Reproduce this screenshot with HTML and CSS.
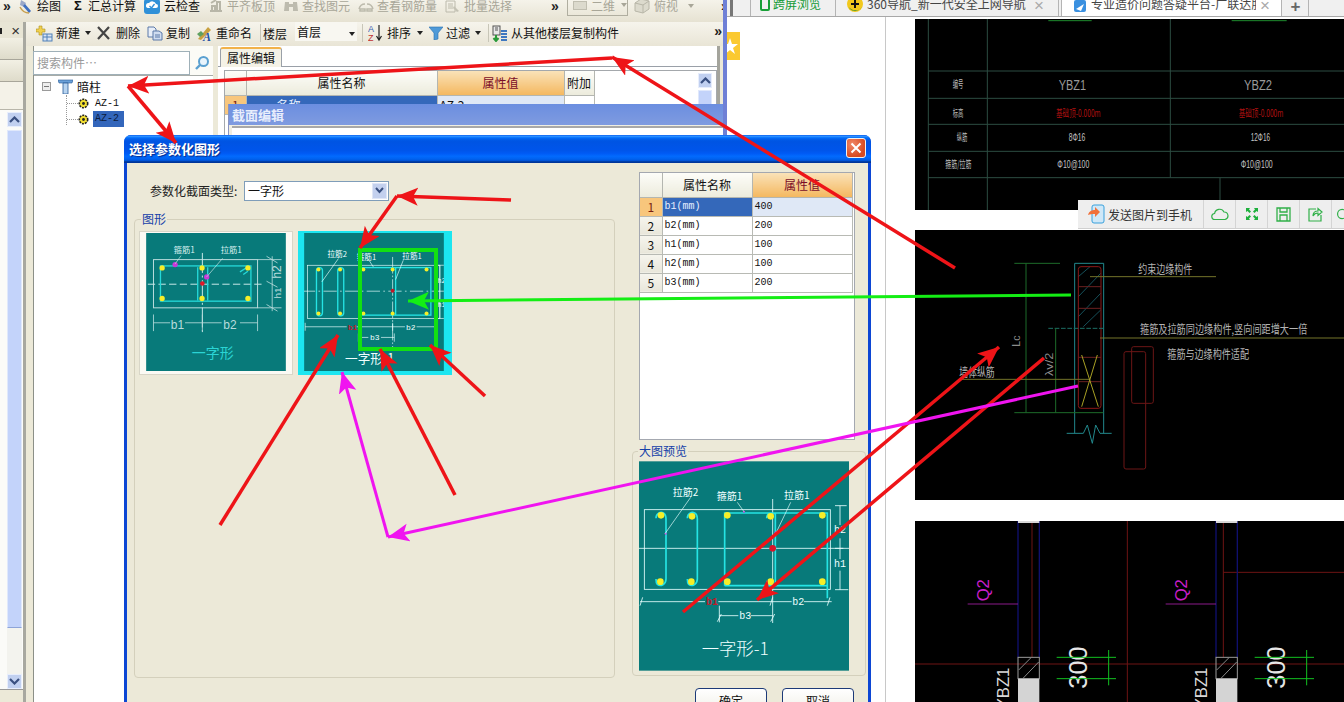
FILE: index.html
```html
<!DOCTYPE html>
<html lang="zh">
<head>
<meta charset="utf-8">
<title>选择参数化图形</title>
<link rel="stylesheet" href="styles.css">
</head>
<body>
<div class="desk">

  <!-- browser behind -->
  <div class="browser">
    <div class="tabstrip">
      <span class="grip"></span>
      <div class="tab tab-cross">
        <svg class="ic" width="10" height="12" viewBox="0 0 10 12"><rect x="1" y="-3" width="8" height="13" rx="1" fill="none" stroke="#18a038" stroke-width="2"/></svg>
        <span class="green">跨屏浏览</span>
      </div>
      <div class="tab tab-nav">
        <svg class="ic" width="16" height="14" viewBox="0 0 16 14"><circle cx="8" cy="4" r="8" fill="#f2c81c"/><path d="M3 9a8 8 0 0 0 10 0l2-2a8 8 0 0 1-13 0z" fill="#2f8f2f"/><path d="M7 0h2v3h3v2H9v3H7V5H4V3h3z" fill="#111"/></svg>
        <span class="tab-text">360导航_新一代安全上网导航</span>
        <span class="tab-x">×</span>
      </div>
      <div class="tab tab-active">
        <svg class="ic" width="14" height="14" viewBox="0 0 14 14"><rect x="1" y="0" width="12" height="12" rx="2" fill="#3a90e0"/><path d="M3 9l8-5-3 7z" fill="#fff"/></svg>
        <span class="tab-text tab-clip">专业造价问题答疑平台-广联达服务</span>
        <span class="tab-x">×</span>
      </div>
      <div class="tab tab-plus">+</div>
    </div>
    <div class="page-line"></div>
  </div>

  <!-- CAD picture 1 -->
  <svg class="cad cad-1" width="429" height="191" viewBox="15 57 1287 573">
    <rect x="15" y="57" width="1287" height="573" fill="#000"/>
    <g stroke="#2c4c42" stroke-width="3" fill="none">
      <path d="M55 57V630M232 57V630M781 57V533M930 533V630M55 213H1302M55 295H1302M55 373H1302M55 454H1302M55 533H1302"/>
    </g>
    <path d="M415 62H545M965 62H1130" stroke="#1e8a2e" stroke-width="3"/>
    <g fill="#bdbdbd" font-family="'Noto Sans CJK SC',sans-serif" font-size="30">
      <text x="128" y="264" textLength="32" lengthAdjust="spacingAndGlyphs">编号</text>
      <text x="128" y="350" textLength="32" lengthAdjust="spacingAndGlyphs">标高</text>
      <text x="140" y="424" textLength="32" lengthAdjust="spacingAndGlyphs">纵筋</text>
      <text x="106" y="505" textLength="78" lengthAdjust="spacingAndGlyphs">箍筋/拉筋</text>
    </g>
    <g fill="#9a9a9a" font-family="'Liberation Sans',sans-serif">
      <text x="446" y="270" font-size="46" textLength="82" lengthAdjust="spacingAndGlyphs">YBZ1</text>
      <text x="1002" y="270" font-size="46" textLength="84" lengthAdjust="spacingAndGlyphs">YBZ2</text>
      <text x="476" y="424" font-size="34" textLength="50" lengthAdjust="spacingAndGlyphs" fill="#c4c4c4">8Φ16</text>
      <text x="1022" y="424" font-size="34" textLength="58" lengthAdjust="spacingAndGlyphs" fill="#c4c4c4">12Φ16</text>
      <text x="442" y="505" font-size="34" textLength="96" lengthAdjust="spacingAndGlyphs" fill="#c4c4c4">Φ10@100</text>
      <text x="992" y="505" font-size="34" textLength="96" lengthAdjust="spacingAndGlyphs" fill="#c4c4c4">Φ10@100</text>
    </g>
    <g fill="#b01010" font-family="'Noto Sans CJK SC',sans-serif" font-size="30">
      <text x="438" y="350" textLength="134" lengthAdjust="spacingAndGlyphs">基础顶-0.000m</text>
      <text x="986" y="350" textLength="134" lengthAdjust="spacingAndGlyphs">基础顶-0.000m</text>
    </g>
  </svg>

  <!-- CAD picture 2 -->
  <svg class="cad cad-2" width="429" height="270" viewBox="15 0 1287 810">
    <rect x="15" y="0" width="1287" height="810" fill="#000"/>
    <path d="M505 140L540 110M505 200L572 130M505 260L572 190M520 290L572 240" stroke="#16505a" stroke-width="3"/>
    <path d="M494 100H581M494 100V610M581 100V610M470 610H520L532 585L547 640L557 585L570 610H605" fill="none" stroke="#22888c" stroke-width="3"/>
    <rect x="505" y="110" width="68" height="425" rx="8" fill="none" stroke="#8a1818" stroke-width="3"/>
    <path d="M505 170H573M505 235H573M505 382H573M505 455H573" stroke="#6a2020" stroke-width="3"/>
    <path d="M415 295H580" stroke="#1c6e64" stroke-width="3" stroke-dasharray="14 5"/>
    <path d="M313 100H450M348 100V548M313 548H580M437 295V548" fill="none" stroke="#1d6b2a" stroke-width="3"/>
    <path d="M540 140H918M570 324H1302M150 448H540" stroke="#74742a" stroke-width="3"/>
    <path d="M515 375L565 530M562 375L515 530" stroke="#a8a024" stroke-width="3"/>
    <rect x="642" y="365" width="65" height="352" rx="6" fill="none" stroke="#6c1616" stroke-width="3"/>
    <rect x="665" y="350" width="65" height="170" rx="6" fill="none" stroke="#6c1616" stroke-width="3"/>
    <g fill="#b4b4b4" font-family="'Noto Sans CJK SC',sans-serif" font-size="36">
      <text x="685" y="133" textLength="162" lengthAdjust="spacingAndGlyphs">约束边缘构件</text>
      <text x="690" y="312" textLength="502" lengthAdjust="spacingAndGlyphs">箍筋及拉筋同边缘构件,竖向间距增大一倍</text>
      <text x="772" y="388" textLength="245" lengthAdjust="spacingAndGlyphs">箍筋与边缘构件适配</text>
      <text x="148" y="440" textLength="106" lengthAdjust="spacingAndGlyphs">墙体纵筋</text>
    </g>
    <g fill="#8c8c8c" font-family="'Liberation Sans',sans-serif" font-size="34">
      <text transform="translate(330 350) rotate(-90)" textLength="34" lengthAdjust="spacingAndGlyphs">Lc</text>
      <text transform="translate(428 438) rotate(-90)" textLength="70" lengthAdjust="spacingAndGlyphs">λv/2</text>
    </g>
  </svg>

  <!-- CAD picture 3 -->
  <svg class="cad cad-3" width="429" height="181" viewBox="15 63 1287 543">
    <rect x="15" y="63" width="1287" height="543" fill="#000"/>
    <path d="M652 63V606M15 492H1302M940 217H1302M366 63V472M940 63V472" stroke="#6e1414" stroke-width="3"/>
    <g id="cad3-a">
      <path d="M324 63V472M388 63V472" stroke="#10106e" stroke-width="4"/>
      <rect x="324" y="63" width="64" height="6" fill="#d8d8d8"/>
      <path d="M173 312H324" stroke="#8a1a8a" stroke-width="3"/>
      <text transform="translate(236 304) rotate(-90)" fill="#c81ec8" font-family="'Liberation Sans',sans-serif" font-size="50">Q2</text>
      <rect x="324" y="472" width="64" height="64" fill="none" stroke="#9a9a9a" stroke-width="3"/>
      <path d="M326 510L362 474M340 534L386 486" stroke="#8a8a8a" stroke-width="3"/>
      <rect x="324" y="536" width="64" height="70" fill="#d4d4d4"/>
      <text transform="translate(296 628) rotate(-90)" fill="#d8d8d8" font-family="'Liberation Sans',sans-serif" font-size="50">YBZ1</text>
      <text transform="translate(532 566) rotate(-90)" fill="#e6e6e6" font-family="'Liberation Sans',sans-serif" font-size="76">300</text>
      <path d="M440 472H618M440 536H618M596 450V556" stroke="#12c020" stroke-width="3"/>
    </g>
    <use href="#cad3-a" x="594"/>
  </svg>

  <!-- share toolbar on the picture -->
  <div class="sharebar">
    <div class="share-main">
      <svg width="18" height="20" viewBox="0 0 18 20"><rect x="4" y="1" width="12" height="18" rx="2" fill="#cfe8f8" stroke="#38a0dc"/><path d="M0 11c1-4 4-5 7-5V3l5 5-5 5v-3c-3 0-5 0-7 1z" fill="#f0703a"/></svg>
      <span>发送图片到手机</span>
    </div>
    <div class="share-ico"><svg width="18" height="14" viewBox="0 0 18 14"><path d="M4 12.5a3 3 0 0 1-.4-6A5 5 0 0 1 13 5a3.800 3.800 0 0 1 1 7.500z" fill="none" stroke="#30b048" stroke-width="1.200"/></svg></div>
    <div class="share-ico"><svg width="14" height="14" viewBox="0 0 14 14"><path d="M1 1h4L4 2.500 6 4.500 4.500 6 2.500 4 1 5zM13 1v4L11.500 4 9.500 6 8 4.500 10 2.500 9 1zM1 13V9l1.500 1 2-2L6 9.500l-2 2L5 13zM13 13H9l1-1.500-2-2L9.500 8l2 2L13 9z" fill="#1eb03c"/></svg></div>
    <div class="share-ico"><svg width="15" height="15" viewBox="0 0 15 15"><path d="M1 1h13v13H1zM4 1v4h7V1M4 14V8h7v6" fill="none" stroke="#30b048" stroke-width="1.300"/></svg></div>
    <div class="share-ico"><svg width="15" height="15" viewBox="0 0 15 15"><path d="M8 2H1v12h12V8M5 9c0-3 2-5 5-5V1.500L14 5l-4 3.500V6c-2 0-4 1-5 3z" fill="none" stroke="#30b048" stroke-width="1.200"/></svg></div>
    <div class="share-ico share-last"><svg width="12" height="14" viewBox="0 0 12 14"><circle cx="10" cy="7" r="5" fill="none" stroke="#30b048" stroke-width="1.300"/></svg></div>
  </div>

  <div class="star-tab"><svg width="13" height="20" viewBox="0 0 13 20"><path d="M-6 8h7l2-6 2 6h6l-5 4 2 6-5-4-5 4z" fill="#fff"/></svg></div>

  <!-- application window -->
  <div class="app">
    <div class="tb1">
      <span class="more more-first">»</span>
      <div class="ti ti-first"><svg width="16" height="16" viewBox="0 0 16 16"><path d="M3 2l5 3-2 4-4-2z" fill="#9aa8c8"/><path d="M7 6l6 7-2 2-6-7z" fill="#3f6fbf"/><path d="M2 9c2 4 5 6 9 6" fill="none" stroke="#c8a050" stroke-width="1.500"/></svg><span>绘图</span></div>
      <div class="ti ti-sum"><b class="sigma">Σ</b><span>汇总计算</span></div>
      <div class="ti ti-cloud"><svg width="16" height="16" viewBox="0 0 16 16"><rect x="0" y="1" width="16" height="15" rx="3" fill="#2f90d8"/><path d="M4 10a2.500 2.500 0 0 1 1-5 4 4 0 0 1 7 1 2 2 0 0 1 0 4z" fill="#fff"/><path d="M5.500 8l2 2 3-4" fill="none" stroke="#2f90d8" stroke-width="1.300"/></svg><span>云检查</span></div>
      <div class="ti off"><svg width="16" height="16" viewBox="0 0 16 16"><path d="M2 13h12M4 12V8h3v4M9 12V4h3v8M3 5l5-3" fill="none" stroke="#b8b6a8" stroke-width="2"/></svg><span>平齐板顶</span></div>
      <div class="ti off"><svg width="16" height="16" viewBox="0 0 16 16"><path d="M2 4h4v9H1zM10 4h4l1 9h-5zM6 6h4v3H6z" fill="#bdbbae"/></svg><span>查找图元</span></div>
      <div class="ti off"><svg width="16" height="16" viewBox="0 0 16 16"><path d="M1 11c1-4 4-5 6-5M15 11c-1-4-4-5-6-5M2 11h5v2H2zM9 11h5v2H9z" fill="none" stroke="#bcbaac" stroke-width="1.500"/></svg><span>查看钢筋量</span></div>
      <div class="ti off"><svg width="16" height="16" viewBox="0 0 16 16"><path d="M1 3h9v11H1z" fill="none" stroke="#bcbaac"/><path d="M3 6h5M3 8h5M3 10h5" stroke="#bcbaac"/><path d="M9 8l5 5-2 1-4-4z" fill="#c4c2b4"/></svg><span>批量选择</span></div>
      <span class="more more-a">»</span>
      <div class="view-box off"><span class="view-plane"></span><span>二维</span><i class="caret caret-off"></i></div>
      <div class="ti off ti-view"><svg width="16" height="16" viewBox="0 0 16 16"><path d="M1 5l6-4 8 2v8l-6 4-8-2z" fill="#dcdacd" stroke="#b8b6a8"/><path d="M1 5l8 2v8M9 7l6-4" fill="none" stroke="#b8b6a8"/></svg><span>俯视</span><i class="caret caret-off caret-view"></i></div>
      <span class="more more-b">»</span>
    </div>

    <div class="app-main">
      <div class="dock">
        <div class="dock-head"><span class="dock-pin"></span><span class="dock-x">×</span></div>
        <div class="dock-tab"></div>
        <div class="dock-tab"></div>
        <div class="dock-tab dock-tab-l"></div>
        <div class="dock-list">
          <div class="vscroll">
            <span class="sb-btn"><svg width="11" height="7" viewBox="0 0 11 7"><path d="M1 6l4.500-4.500L10 6" fill="none" stroke="#3a5080" stroke-width="2.200"/></svg></span>
            <span class="sb-thumb"></span>
            <span class="sb-track"></span>
            <span class="sb-btn"><svg width="11" height="7" viewBox="0 0 11 7"><path d="M1 1l4.500 4.500L10 1" fill="none" stroke="#3a5080" stroke-width="2.200"/></svg></span>
          </div>
        </div>
      </div>

      <div class="work">
        <div class="tb2">
          <div class="ti"><svg width="17" height="17" viewBox="0 0 17 17"><path d="M3 1h3v3h3v3H6v3H3V7H0V4h3z" fill="#f0d050" stroke="#b09020" stroke-width=".6"/><rect x="7" y="9" width="9" height="7" fill="#d8e4f4" stroke="#5080b8"/><path d="M7 12h9M11 9v7" stroke="#5080b8"/></svg><span>新建</span><i class="caret"></i></div>
          <div class="ti ti-del"><svg width="13" height="14" viewBox="0 0 13 14"><path d="M1 1l11 12M12 1L1 13" stroke="#444" stroke-width="2.200"/></svg><span>删除</span></div>
          <div class="ti"><svg width="16" height="15" viewBox="0 0 16 15"><path d="M1 1h6l2 2v8H1z" fill="#e8eef8" stroke="#5a78a8"/><path d="M6 5h6l3 2v7H6z" fill="#cfdcf0" stroke="#5a78a8"/><path d="M8 9h5M8 11h5" stroke="#5a78a8"/></svg><span>复制</span></div>
          <div class="ti ti-ren"><svg width="17" height="17" viewBox="0 0 17 17"><path d="M2 14L12 2l3 3L5 15z" fill="#c8a040"/><path d="M1 9l4-3 3 3-4 3z" fill="#60a060"/><text x="7" y="16" font-family="Liberation Serif,serif" font-size="12" font-weight="700" font-style="italic" fill="#2050a0">A</text></svg><span>重命名</span></div>
          <span class="sep"></span>
          <span class="floor-label">楼层</span>
          <div class="floor-select"><span>首层</span><i class="caret"></i></div>
          <span class="sep sep-b"></span>
          <div class="ti ti-sort"><svg width="15" height="18" viewBox="0 0 15 18"><text x="0" y="8" font-family="Liberation Sans,sans-serif" font-size="9" fill="#3a60b0">A</text><text x="0" y="17" font-family="Liberation Sans,sans-serif" font-size="9" fill="#c03030">Z</text><path d="M11 1v14M8.500 12l2.500 4 2.500-4" fill="none" stroke="#222" stroke-width="1.200"/></svg><span>排序</span><i class="caret"></i></div>
          <div class="ti ti-filter"><svg width="14" height="14" viewBox="0 0 14 14"><path d="M0 1h14L9 7v6l-4 1V7z" fill="#4f9ad8" stroke="#2a70b0" stroke-width=".6"/></svg><span>过滤</span><i class="caret"></i></div>
          <span class="sep sep-c"></span>
          <div class="ti ti-copyf"><svg width="16" height="17" viewBox="0 0 16 17"><rect x="1" y="1" width="7" height="9" fill="#e8e8e8" stroke="#555"/><path d="M3 3h3M3 5h3" stroke="#555"/><path d="M9 6h6M9 9h6M9 12h6M9 15h6" stroke="#3f78c0" stroke-width="2"/><path d="M4 10v5M1.500 13L4 16l2.500-3" fill="none" stroke="#2a9a3a" stroke-width="2"/></svg><span>从其他楼层复制构件</span></div>
          <span class="more more-c">»</span>
        </div>

        <div class="panes">
          <div class="tree-pane">
            <div class="search">
              <span class="search-input">搜索构件…</span>
              <span class="search-btn"><svg width="16" height="16" viewBox="0 0 16 16"><circle cx="9.500" cy="6.500" r="4.500" fill="#e8f4fc" stroke="#5aa0d0" stroke-width="2"/><path d="M6 10l-4 4" stroke="#5aa0d0" stroke-width="2.400"/></svg></span>
            </div>
            <div class="tree">
              <div class="tree-root">
                <span class="expander"></span>
                <svg width="15" height="15" viewBox="0 0 15 15"><path d="M0 1h15l-1 3H1z" fill="#6aa0d8" stroke="#2a5a98" stroke-width=".6"/><path d="M5 4h5v11H5z" fill="#b8d4f0" stroke="#2a5a98" stroke-width=".8"/></svg>
                <span class="root-label">暗柱</span>
              </div>
              <div class="tree-kids">
                <div class="leaf">
                  <span class="dots"></span>
                  <svg class="gear" width="11" height="11" viewBox="0 0 11 11"><circle cx="5.500" cy="5.500" r="4.200" fill="#f4e030" stroke="#222" stroke-width="1.600" stroke-dasharray="2 1"/><circle cx="5.500" cy="5.500" r="1.400" fill="#222"/></svg>
                  <span class="leaf-name">AZ-1</span>
                </div>
                <div class="leaf">
                  <span class="dots"></span>
                  <svg class="gear" width="11" height="11" viewBox="0 0 11 11"><circle cx="5.500" cy="5.500" r="4.200" fill="#f4e030" stroke="#222" stroke-width="1.600" stroke-dasharray="2 1"/><circle cx="5.500" cy="5.500" r="1.400" fill="#222"/></svg>
                  <span class="leaf-name leaf-sel">AZ-2</span>
                </div>
              </div>
            </div>
          </div>

          <div class="prop-pane">
            <div class="prop-tabs"><span class="prop-tab">属性编辑</span></div>
            <div class="prop-body">
              <table class="ptable ptable-main">
                <tr><th class="c-idx"></th><th class="c-name">属性名称</th><th class="c-val">属性值</th><th class="c-add">附加</th></tr>
                <tr><td class="idx-sel">1</td><td class="cell-sel">名称</td><td class="cell-val">AZ-2</td><td></td></tr>
              </table>
              <div class="prop-scroll">
                <span class="sb-btn"><svg width="11" height="7" viewBox="0 0 11 7"><path d="M1 6l4.500-4.500L10 6" fill="none" stroke="#3a5080" stroke-width="2.200"/></svg></span>
                <span class="sb-thumb"></span>
              </div>
            </div>
          </div>
        </div>
      </div>
    </div>
  </div>

  <!-- section editor behind the dialog -->
  <div class="section-win">
    <div class="section-title">截面编辑</div>
    <div class="section-body"></div>
  </div>

  <!-- dialog -->
  <div class="dialog">
    <div class="dlg-title">
      <span>选择参数化图形</span>
      <span class="dlg-close"><svg width="12" height="12" viewBox="0 0 12 12"><path d="M1.500 1.500l9 9M10.500 1.500l-9 9" stroke="#fff" stroke-width="2"/></svg></span>
    </div>
    <div class="dlg-body">
      <div class="dlg-left">
        <div class="type-row">
          <span class="type-label">参数化截面类型:</span>
          <div class="combo"><span>一字形</span><span class="combo-btn"><svg width="9" height="7" viewBox="0 0 9 7"><path d="M1 1l3.500 4L8 1" fill="none" stroke="#3a5080" stroke-width="2"/></svg></span></div>
        </div>
        <fieldset class="group group-shapes">
          <legend>图形</legend>
          <div class="thumbs">
            <div class="thumb">
              <svg width="140" height="138" viewBox="63 295 420 415">
                <rect x="63" y="295" width="420" height="415" fill="#087a7a"/>
                <rect x="85" y="375" width="313" height="145" fill="none" stroke="#b9dcdc" stroke-width="3"/>
                <path d="M68 449H420" stroke="#c8e8e8" stroke-width="3" stroke-dasharray="22 10"/>
                <path d="M232 355V600" stroke="#c8e8e8" stroke-width="3" stroke-dasharray="60 8 6 8"/>
                <rect x="106" y="394" width="272" height="106" fill="none" stroke="#25d8d8" stroke-width="4"/>
                <path d="M218 398V498M248 398V498" stroke="#25d8d8" stroke-width="4"/>
                <path d="M345 412l22-14M355 420l14-10" stroke="#25d8d8" stroke-width="4"/>
                <g fill="#f6ee28"><circle cx="111" cy="400" r="8"/><circle cx="231" cy="400" r="8"/><circle cx="369" cy="400" r="8"/><circle cx="111" cy="492" r="8"/><circle cx="231" cy="492" r="8"/><circle cx="369" cy="492" r="8"/></g>
                <circle cx="150" cy="390" r="8" fill="#c838d8"/><circle cx="245" cy="427" r="8" fill="#c838d8"/><circle cx="232" cy="447" r="7" fill="#e01828"/>
                <path d="M150 388l18-25M245 427l48-56" stroke="#c8e8e8" stroke-width="2"/>
                <g fill="#d8f0f0" font-family="'Noto Sans CJK SC',sans-serif" font-size="25"><text x="146" y="354">箍筋1</text><text x="287" y="354">拉筋1</text></g>
                <path d="M85 565H135M180 565H290M345 565H398M85 540V590M232 540V590M398 540V590M398 375H470M398 520H470M442 365V530M425 440L458 458M425 365L458 385M425 510L458 530" fill="none" stroke="#b9dcdc" stroke-width="2.500"/>
                <g fill="#b9dcdc" font-family="'Liberation Sans',sans-serif" font-size="36"><text x="137" y="584">b1</text><text x="295" y="584">b2</text><text transform="translate(468 432) rotate(-90)">h2</text><text transform="translate(468 492) rotate(-90)" font-size="30">h1</text></g>
                <text x="200" y="672" fill="#2bd4d4" font-family="'Noto Sans CJK SC',sans-serif" font-size="42">一字形</text>
              </svg>
            </div>
            <div class="thumb thumb-on">
              <svg width="140" height="138" viewBox="537 293 420 415">
                <rect x="537" y="293" width="420" height="415" fill="#087a7a"/>
                <rect x="547" y="390" width="398" height="160" fill="none" stroke="#e8ffff" stroke-width="2"/>
                <path d="M530 468H957" stroke="#e8ffff" stroke-width="2" stroke-dasharray="40 10 5 10"/>
                <path d="M803 365V640" stroke="#e8ffff" stroke-width="2" stroke-dasharray="50 6 5 6"/>
                <rect x="574" y="397" width="18" height="145" rx="9" fill="none" stroke="#25e4e4" stroke-width="4"/>
                <rect x="638" y="397" width="18" height="145" rx="9" fill="none" stroke="#25e4e4" stroke-width="4"/>
                <rect x="708" y="397" width="210" height="143" fill="none" stroke="#25e4e4" stroke-width="4"/>
                <path d="M812 397V540" stroke="#25e4e4" stroke-width="4"/>
                <g fill="#f6ee28"><circle cx="580" cy="403" r="6"/><circle cx="645" cy="403" r="6"/><circle cx="715" cy="403" r="6"/><circle cx="803" cy="403" r="6"/><circle cx="905" cy="403" r="6"/><circle cx="580" cy="535" r="6"/><circle cx="645" cy="535" r="6"/><circle cx="715" cy="535" r="6"/><circle cx="803" cy="535" r="6"/><circle cx="905" cy="535" r="6"/></g>
                <circle cx="803" cy="467" r="6" fill="#c01828"/>
                <path d="M590 440L640 370M745 395L730 372M812 433L835 375" stroke="#e8ffff" stroke-width="2"/>
                <g fill="#f0ffff" font-family="'Noto Sans CJK SC',sans-serif" font-size="23"><text x="607" y="366">拉筋2</text><text x="695" y="375">箍筋1</text><text x="832" y="372">拉筋1</text></g>
                <path d="M540 575H665M695 575H840M875 575H930M540 563V587M803 563V587M930 563V587M700 607H730M768 607H808M700 595V620M808 595V620M935 390H957M935 550H957M945 390V550" fill="none" stroke="#e8ffff" stroke-width="2"/>
                <text x="668" y="584" fill="#c01c2c" font-family="'Liberation Mono',monospace" font-size="24" font-weight="700">b1</text>
                <g fill="#f0ffff" font-family="'Liberation Mono',monospace" font-size="24"><text x="843" y="584">b2</text><text x="735" y="615">b3</text><text x="938" y="444" font-size="20">h2</text><text x="938" y="516" font-size="20">h1</text></g>
                <text x="660" y="684" fill="#f0ffff" font-family="'Noto Sans CJK SC',sans-serif" font-size="38">一字形-1</text>
              </svg>
            </div>
          </div>
        </fieldset>
      </div>

      <div class="dlg-right">
        <div class="attr-box">
          <table class="ptable ptable-attr">
            <tr><th class="a-idx"></th><th class="a-name">属性名称</th><th class="c-val a-val">属性值</th></tr>
            <tr><td class="idx-sel">1</td><td class="cell-sel mono">b1(mm)</td><td class="cell-val mono">400</td></tr>
            <tr><td class="idx">2</td><td class="mono">b2(mm)</td><td class="mono">200</td></tr>
            <tr><td class="idx">3</td><td class="mono">h1(mm)</td><td class="mono">100</td></tr>
            <tr><td class="idx">4</td><td class="mono">h2(mm)</td><td class="mono">100</td></tr>
            <tr><td class="idx">5</td><td class="mono">b3(mm)</td><td class="mono">200</td></tr>
          </table>
        </div>
        <fieldset class="group group-preview">
          <legend>大图预览</legend>
          <svg class="preview" width="210" height="210" viewBox="27 67 630 628">
            <rect x="27" y="67" width="630" height="628" fill="#087a7a"/>
            <rect x="43" y="212" width="558" height="239" fill="none" stroke="#e8ffff" stroke-width="2.500"/>
            <path d="M25 328H657M428 180V552" stroke="#e8ffff" stroke-width="2.500"/>
            <path d="M78 238C78 222 92 218 100 222C107 226 108 232 108 240V420C108 436 92 444 82 436C78 432 78 428 78 420" fill="none" stroke="#25e4e4" stroke-width="5"/>
            <path d="M172 238C172 222 186 218 194 222C201 226 202 232 202 240V420C202 436 186 444 176 436C172 432 172 428 172 420" fill="none" stroke="#25e4e4" stroke-width="5"/>
            <path d="M284 440V222H592V478M284 440H592M410 238C410 222 424 220 436 224V440" fill="none" stroke="#25e4e4" stroke-width="5"/>
            <path d="M410 425C410 436 420 442 436 440" fill="none" stroke="#25e4e4" stroke-width="5"/>
            <g fill="#f6ee28"><circle cx="93" cy="229" r="10"/><circle cx="186" cy="232" r="10"/><circle cx="292" cy="229" r="10"/><circle cx="422" cy="232" r="10"/><circle cx="577" cy="229" r="10"/><circle cx="91" cy="428" r="10"/><circle cx="184" cy="428" r="10"/><circle cx="292" cy="428" r="10"/><circle cx="422" cy="428" r="10"/><circle cx="577" cy="428" r="10"/></g>
            <circle cx="428" cy="328" r="10" fill="#d81428"/>
            <circle cx="107" cy="284" r="3" fill="#c838d8"/><circle cx="342" cy="218" r="3" fill="#c838d8"/><circle cx="438" cy="282" r="5" fill="#c838d8"/>
            <path d="M105 284L182 175M342 218L322 190M438 282L482 190" stroke="#e8ffff" stroke-width="2"/>
            <g fill="#f0ffff" font-family="'Noto Sans CJK SC',sans-serif" font-size="30"><text x="128" y="170">拉筋2</text><text x="260" y="183">箍筋1</text><text x="462" y="180">拉筋1</text></g>
            <path d="M30 488H225M265 488H485M522 488H605M38 475L30 500M428 475L420 500M600 475L592 500M268 530H325M362 530H428M268 500V550M262 548L274 525M422 548L434 525M615 200H650M615 328H640M615 452H655M630 200V258M630 298V360M630 395V452" fill="none" stroke="#e8ffff" stroke-width="2.500"/>
            <text x="228" y="498" fill="#c01c2c" font-family="'Liberation Mono',monospace" font-size="30" font-weight="700">b1</text>
            <g fill="#f0ffff" font-family="'Liberation Mono',monospace" font-size="30"><text x="487" y="498">b2</text><text x="328" y="540">b3</text><text x="612" y="385">h1</text><text x="612" y="283">h2</text></g>
            <text x="215" y="648" fill="#f0ffff" font-family="'Noto Sans CJK SC',sans-serif" font-size="52" font-weight="300">一字形-1</text>
          </svg>
        </fieldset>
        <div class="dlg-buttons">
          <span class="xp-btn">确定</span>
          <span class="xp-btn">取消</span>
        </div>
      </div>
    </div>
  </div>

  <!-- annotations drawn over everything -->
  <svg class="notes" width="1344" height="702" viewBox="0 0 1344 702">
    <defs>
      <marker id="head-red" markerUnits="userSpaceOnUse" markerWidth="24" markerHeight="20" refX="21" refY="9" orient="auto"><path d="M0 0L21 9L0 18L5 9z" fill="#ee1418"/></marker>
      <marker id="head-green" markerUnits="userSpaceOnUse" markerWidth="24" markerHeight="20" refX="21" refY="9" orient="auto"><path d="M0 0L21 9L0 18L5 9z" fill="#14ee14"/></marker>
      <marker id="head-pink" markerUnits="userSpaceOnUse" markerWidth="24" markerHeight="20" refX="21" refY="9" orient="auto"><path d="M0 0L21 9L0 18L5 9z" fill="#f014f0"/></marker>
    </defs>
    <rect class="sel-rect" x="360" y="250" width="76" height="99"/>
    <g class="red">
      <path d="M955 268L612 57" marker-end="url(#head-red)"/>
      <path d="M612 58L128 86" marker-end="url(#head-red)"/>
      <path d="M128 86L176 143" marker-end="url(#head-red)"/>
      <path d="M511 200L397 196" marker-end="url(#head-red)"/>
      <path d="M397 196L360 248" marker-end="url(#head-red)"/>
      <path d="M220 525L338 335" marker-end="url(#head-red)"/>
      <path d="M455 495L380 349" marker-end="url(#head-red)"/>
      <path d="M485 396L430 345" marker-end="url(#head-red)"/>
      <path d="M683 612L999 347" marker-end="url(#head-red)"/>
      <path d="M1044 358L757 600" marker-end="url(#head-red)"/>
    </g>
    <path class="green-line" d="M1071 295L408 301" marker-end="url(#head-green)"/>
    <g class="pink">
      <path d="M1078 386L388 537" marker-end="url(#head-pink)"/>
      <path d="M388 537L342 372" marker-end="url(#head-pink)"/>
    </g>
  </svg>
</div>
</body>
</html>
```
FILE: styles.css
```css
* { box-sizing: border-box; }
html, body { margin: 0; padding: 0; }
body { font-family: "Noto Sans CJK SC", "Liberation Sans", sans-serif; font-size: 12px; color: #111; background: #fff; }
.desk { position: relative; width: 1344px; height: 702px; overflow: hidden; background: #fff; }

/* browser behind */
.browser { position: absolute; left: 727px; top: 0; width: 617px; height: 702px; }
.tabstrip { display: flex; align-items: flex-end; height: 17px; background: #f0f0f0; border-bottom: 1px solid #a8a8a8; overflow: hidden; color: #444; }
.grip { width: 3px; height: 16px; margin: 0 17px 0 3px; background: #777; align-self: flex-start; }
.tab { display: flex; align-items: center; height: 16px; gap: 2px; border-right: 1px solid #b4b4b4; line-height: 14px; white-space: nowrap; overflow: hidden; flex: none; }
.tab .ic { flex: none; align-self: flex-start; }
.tab-cross { width: 86px; padding-left: 9px; border-left: 1px solid #b4b4b4; gap: 3px; }
.tab-cross span { margin-top: -9px; }
.green { color: #129a34; }
.tab-nav { width: 222px; padding-left: 10px; margin-left: 1px; gap: 4px; }
.tab-active { width: 221px; padding-left: 11px; margin-left: 2px; background: #fff; border-left: 1px solid #b4b4b4; height: 17px; margin-bottom: -1px; gap: 4px; }
.tab-text { margin-top: -9px; }
.tab-nav .tab-text { width: 163px; }
.tab-clip { width: 165px; overflow: hidden; }
.tab-x { font: 17px/14px "Liberation Sans", sans-serif; color: #aaa; margin-top: -5px; }
.tab-plus { width: 26px; justify-content: center; font: 700 17px/14px "Liberation Sans", sans-serif; color: #666; margin-left: 1px; align-items: flex-start; }
.page-line { width: 1px; height: 685px; margin-left: 158px; background: #c8c8c8; }
.star-tab { position: absolute; left: 727px; top: 32px; width: 13px; height: 28px; padding-top: 4px; background: #fbc930; }

/* CAD pictures */
.cad { position: absolute; left: 915px; display: block; }
.cad-1 { top: 19px; }
.cad-2 { top: 230px; }
.cad-3 { top: 521px; }

/* share toolbar */
.sharebar { position: absolute; left: 1078px; top: 200px; width: 266px; height: 29px; display: flex; background: #eeeeee; border-bottom: 1px solid #d0d0d0; font-size: 12px; color: #333; }
.share-main { width: 126px; display: flex; align-items: center; gap: 2px; padding-left: 10px; border-right: 1px solid #d4d4d4; }
.share-ico { width: 32px; display: flex; align-items: center; justify-content: center; border-right: 1px solid #d4d4d4; }
.share-ico:first-of-type { width: 33px; }
.share-last { border-right: 0; width: 12px; justify-content: flex-start; padding-left: 1px; }

/* application window */
.app { position: absolute; left: 0; top: 0; width: 727px; height: 702px; border-right: 4px solid #6f80d6; background: #ece9d8; display: flex; flex-direction: column; overflow: hidden; }
.tb1 { display: flex; align-items: flex-start; gap: 8px; height: 22px; background: linear-gradient(#f5f3ea, #e6e2d2); flex: none; }
.tb1 .ti { height: 12px; }
.tb1 .ti svg { margin-top: -1px; }
.ti { display: flex; align-items: center; gap: 3px; white-space: nowrap; flex: none; line-height: 14px; }
.off { color: #a8a698; }
.more { font: 700 14px/12px "Liberation Sans", sans-serif; color: #222; }
.more-first { width: 7px; margin-left: 3px; }
.ti-sum { margin-left: 3px; gap: 4px; }
.sigma { width: 12px; font: 700 13px/14px "Liberation Sans", sans-serif; color: #111; text-align: center; }
.ti-cloud { gap: 4px; }
.more-a { margin-left: 31px; }
.view-box { display: flex; align-items: center; gap: 4px; width: 61px; height: 17px; margin-top: -1px; padding: 0 3px 4px 5px; border: 1px solid #b0aea0; border-top: 0; flex: none; white-space: nowrap; }
.view-plane { width: 14px; height: 9px; flex: none; background: #dcdacd; border: 1px solid #c0beb0; }
.ti-view { margin-left: -2px; gap: 4px; }
.caret { display: inline-block; flex: none; width: 0; height: 0; border: 3px solid transparent; border-top: 4px solid #222; border-bottom: 0; margin-left: 2px; }
.caret-off { border-top-color: #a8a698; }
.caret-view { margin-left: 6px; }
.more-b { margin-left: 19px; }

.app-main { display: flex; flex: 1; min-height: 0; }
.dock { width: 26px; flex: none; display: flex; flex-direction: column; border-right: 3px solid #a8a8a0; }
.dock-head { height: 16px; display: flex; align-items: center; justify-content: space-between; padding: 2px 3px 0 0; background: #e8e5d5; }
.dock-pin { width: 2px; height: 6px; background: #222; }
.dock-x { font: 15px/12px "Liberation Sans", sans-serif; color: #333; }
.dock-tab { height: 22px; background: linear-gradient(#f2f0e4, #dedbca); border-bottom: 1px solid #a8a69a; }
.dock-tab-l { height: 28px; background: #f4f2e8; border-bottom: 1px solid #b8b6aa; }
.dock-list { height: 580px; background: #fbfbf8; padding-left: 7px; border-bottom: 1px solid #999; }
.vscroll { width: 15px; height: 100%; display: flex; flex-direction: column; padding-top: 2px; }
.sb-btn { height: 15px; flex: none; display: flex; align-items: center; justify-content: center; border: 1px solid #e8eefc; background: #c1d0f0; }
.sb-thumb { display: block; flex: none; height: 498px; margin-top: 3px; background: #c3d3fa; border: 1px solid #e0e8fb; border-bottom-color: #8ea4d8; }
.sb-track { display: block; flex: 1; background: #f3f3ee; }

.work { flex: 1; display: flex; flex-direction: column; min-width: 0; }
.tb2 { height: 24px; flex: none; display: flex; align-items: center; padding: 0 0 2px 10px; gap: 7px; background: linear-gradient(#f6f4ec, #e9e5d6); white-space: nowrap; }
.ti-del { margin-left: -1px; gap: 6px; }
.ti-ren { gap: 3px; margin-left: -1px; }
.sep { width: 1px; height: 18px; flex: none; background: #c8c6b8; margin-left: 1px; margin-right: -5px; }
.floor-label { flex: none; }
.floor-select { width: 62px; height: 19px; flex: none; margin: -3px 0 0 1px; padding: 0 2px 0 2px; background: #f8f7f1; display: flex; align-items: center; justify-content: space-between; }
.floor-select .caret { margin-top: 5px; }
.sep-b { margin: 0 -2px 0 -2px; }
.ti-sort { gap: 4px; }
.ti-filter { margin-left: -1px; gap: 3px; }
.sep-c { margin: 0 -4px 0 0; }
.ti-copyf { gap: 3px; }
.more-c { margin-left: 88px; align-self: flex-start; margin-top: 3px; }

.panes { flex: 1; display: flex; min-height: 0; background: #ece9d8; padding-left: 7px; }
.tree-pane { width: 180px; flex: none; display: flex; flex-direction: column; border-left: 1px solid #8c9088; background: #f6f5ee; }
.search { display: flex; height: 30px; flex: none; padding-top: 5px; background: #fbfbf6; border-bottom: 1px solid #a8aca8; }
.search-input { width: 157px; height: 24px; margin-left: -1px; padding-left: 3px; background: #fff; border: 1px solid #9fb0b8; color: #9a9a9a; line-height: 21px; font-size: 12px; }
.search-btn { flex: 1; display: flex; align-items: center; justify-content: center; }
.tree { flex: 1; background: #fff; padding-left: 8px; }
.tree-root { display: flex; align-items: center; height: 20px; }
.expander { width: 9px; height: 9px; margin-right: 7px; border: 1px solid #9a9a9a; background: linear-gradient(#777, #777) center / 5px 1px no-repeat #eee; }
.root-label { margin-left: 4px; font-size: 12px; }
.tree-kids { margin-left: 24px; height: 30px; border-left: 1px dotted #999; margin-top: -1px; }
.leaf { display: flex; align-items: center; height: 16px; }
.dots { width: 11px; border-top: 1px dotted #999; }
.gear { flex: none; }
.leaf-name { font: 10px/15px "Liberation Mono", monospace; color: #111; padding: 0 2px; margin-left: 4px; }
.leaf-sel { width: 31px; height: 16px; background: #3366bb; color: #0c1c3c; }

.prop-pane { margin-left: 5px; width: 502px; flex: none; display: flex; flex-direction: column; background: #fff; border-right: 3px solid #a4a49c; }
.prop-tabs { height: 21px; flex: none; border-bottom: 1px solid #9aa0a8; padding: 1px 0 0 2px; }
.prop-tab { display: block; width: 62px; height: 20px; text-align: center; line-height: 18px; background: #f4f2e6; border: 1px solid #9aa0a8; border-top: 2px solid #f2b24a; border-bottom: 0; border-radius: 3px 3px 0 0; }
.prop-body { flex: 1; margin: 3px 0 0 6px; border: 1px solid #a4a8ac; border-bottom: 0; display: flex; align-items: flex-start; justify-content: space-between; padding-right: 4px; }
.ptable { border-collapse: collapse; table-layout: fixed; font-size: 12px; }
.ptable th { font-weight: 400; height: 24px; background: linear-gradient(#fdfdf9, #ecebdc); border: 1px solid #b4b6b0; border-width: 0 1px 1px 0; }
.ptable .c-val { background: linear-gradient(#fae2b8, #f4b860); color: #7a0c28; }
.ptable td { height: 19px; padding: 0 0 0 2px; border: 1px solid #b8bab4; border-width: 0 1px 1px 0; background: #fff; }
.ptable-main { width: 369px; }
.c-idx { width: 21px; }
.c-name { width: 191px; }
.c-add { width: 30px; }
.c-val { width: 127px; }
.ptable td.idx-sel { text-align: center; padding: 0; background: #f8c67c; color: #7a1c10; font-size: 12px; }
.ptable td.idx { text-align: center; padding: 0; background: linear-gradient(#f6f5ee, #e8e6da); font-size: 12px; }
.ptable td.cell-sel { background: #3468ba; color: #e8f0ff; }
.ptable td.cell-val { background: #dfe8f6; }
.ptable-main td.cell-sel { padding-left: 30px; }
.prop-scroll { width: 14px; margin-top: 2px; display: flex; flex-direction: column; }
.prop-scroll .sb-thumb { height: 60px; margin-top: 2px; }

/* section editor */
.section-win { position: absolute; left: 228px; top: 104px; width: 495px; height: 40px; background: #f0eee2; border-left: 1px solid #8a94c0; }
.section-title { height: 21px; padding-left: 3px; background: linear-gradient(#6b8ee0, #7f9be0); color: #e8eefc; font-weight: 700; font-size: 13px; line-height: 21px; }
.section-body { height: 19px; margin-top: 1px; background: #fff; border-top: 2px solid #a8a8a8; margin-left: 3px; }

/* dialog */
.dialog { position: absolute; left: 124px; top: 135px; width: 747px; height: 567px; display: flex; flex-direction: column; overflow: hidden; background: #0c46d4; border-radius: 7px 7px 0 0; }
.dlg-title { height: 28px; flex: none; display: flex; align-items: center; justify-content: space-between; padding: 0 5px 2px 5px; color: #fff; font-size: 13px; font-weight: 700; text-shadow: 1px 1px 1px #0a2c88; background: linear-gradient(#0058ee 0, #3593ff 4%, #288eff 6%, #127dff 8%, #036ffc 10%, #0262ee 14%, #0057e5 20%, #0054e3 24%, #0055eb 56%, #005bf5 66%, #026afe 76%, #0062ef 86%, #0052d6 92%, #0040ab 94%, #003092 100%); }
.dlg-close { width: 20px; height: 20px; display: flex; align-items: center; justify-content: center; border: 1px solid #f0f0f0; border-radius: 3px; background: radial-gradient(circle at 30% 30%, #f08868, #d84a20 70%); }
.dlg-body { flex: 1; margin: 0 3px; display: flex; background: #ece9d8; min-height: 0; }
.dlg-left { width: 505px; flex: none; padding: 18px 0 0 7px; }
.type-row { display: flex; align-items: center; height: 19px; }
.type-label { margin-left: 16px; width: 94px; white-space: nowrap; font-size: 12px; color: #222; }
.combo { width: 145px; height: 20px; display: flex; justify-content: space-between; align-items: center; padding: 0 1px 0 3px; background: #fff; border: 1px solid #7f9db9; font-size: 12px; }
.combo-btn { width: 15px; height: 16px; display: flex; align-items: center; justify-content: center; background: #c3d0ee; border: 1px solid #dfe6f6; }
.group { margin: 0; min-width: 0; border: 1px solid #d4d0bc; border-radius: 4px; }
.group legend { padding: 0 1px; color: #1540a8; font-size: 12px; line-height: 14px; }
.group-shapes { width: 481px; height: 466px; margin-top: 12px; padding: 5px 0 0 4px; }
.group-shapes legend { margin-left: 2px; }
.thumbs { display: flex; gap: 5px; }
.thumb { width: 154px; height: 144px; padding: 1px 0 0 6px; background: #fbfaf4; border: 1px solid #d8d6c8; }
.thumb svg { display: block; }
.thumb-on { padding: 2px 0 0 6px; background: #1ce6f0; border: 0; }
.dlg-right { width: 236px; flex: none; padding-top: 9px; }
.attr-box { width: 216px; height: 268px; margin-left: 7px; background: #fff; border: 1px solid #a4a8b0; }
.ptable-attr { width: 212px; }
.a-idx { width: 22px; }
.a-name { width: 90px; }
.a-val { width: 100px; }
.mono { font: 10px/18px "Liberation Mono", monospace; }
.group-preview { width: 234px; height: 232px; margin-top: 4px; padding: 3px 0 0 6px; }
.group-preview legend { margin-left: -1px; }
.preview { display: block; }
.dlg-buttons { display: flex; justify-content: flex-end; gap: 15px; margin-top: 12px; padding-right: 14px; }
.xp-btn { width: 72px; height: 26px; text-align: center; line-height: 24px; font-size: 12px; background: linear-gradient(#fff, #f0efe6); border: 1px solid #1c3a78; border-radius: 4px; }

/* annotations */
.notes { position: absolute; left: 0; top: 0; display: block; pointer-events: none; }
.sel-rect { fill: none; stroke: #12e012; stroke-width: 4; }
.red path { fill: none; stroke: #ee1418; stroke-width: 3.5; }
.green-line { fill: none; stroke: #14ee14; stroke-width: 3; }
.pink path { fill: none; stroke: #f014f0; stroke-width: 3; }
```
